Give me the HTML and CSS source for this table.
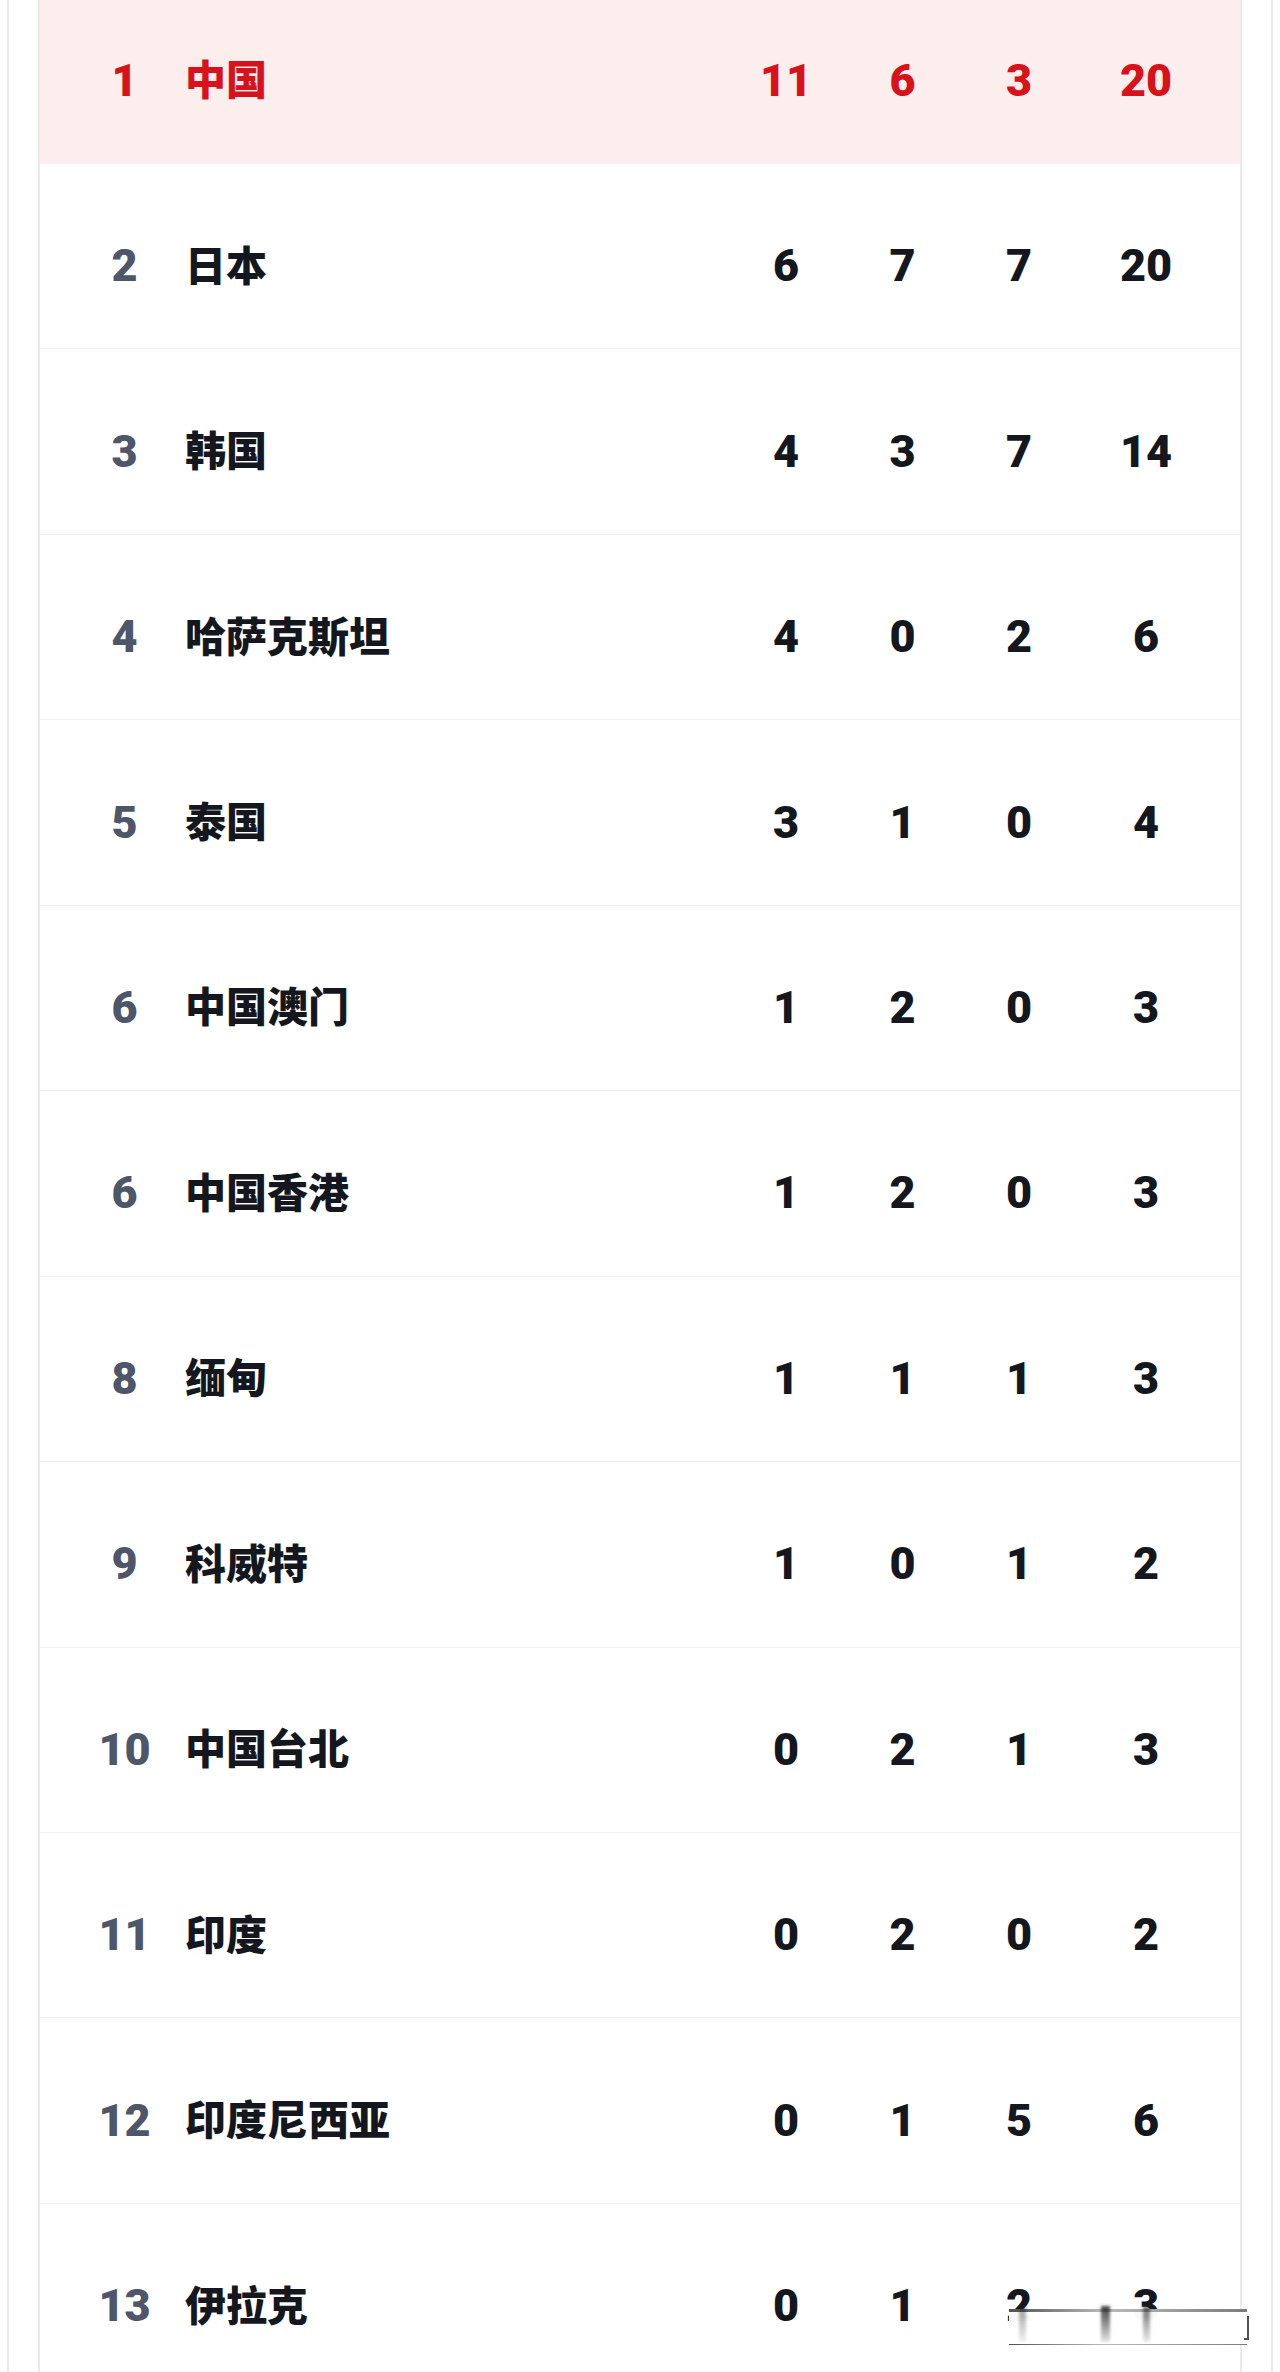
FILE: index.html
```html
<!DOCTYPE html>
<html lang="zh-CN">
<head>
<meta charset="utf-8">
<title>奖牌榜</title>
<link rel="stylesheet" href="styles.css">
</head>
<body>
<div class="frame">
  <div class="card">
    <div class="row lead">
      <span class="rank">1</span><span class="name">中国</span><span class="num">11</span><span class="num">6</span><span class="num">3</span><span class="num">20</span>
    </div>
    <div class="row">
      <span class="rank">2</span><span class="name">日本</span><span class="num">6</span><span class="num">7</span><span class="num">7</span><span class="num">20</span>
    </div>
    <div class="row">
      <span class="rank">3</span><span class="name">韩国</span><span class="num">4</span><span class="num">3</span><span class="num">7</span><span class="num">14</span>
    </div>
    <div class="row">
      <span class="rank">4</span><span class="name">哈萨克斯坦</span><span class="num">4</span><span class="num">0</span><span class="num">2</span><span class="num">6</span>
    </div>
    <div class="row">
      <span class="rank">5</span><span class="name">泰国</span><span class="num">3</span><span class="num">1</span><span class="num">0</span><span class="num">4</span>
    </div>
    <div class="row">
      <span class="rank">6</span><span class="name">中国澳门</span><span class="num">1</span><span class="num">2</span><span class="num">0</span><span class="num">3</span>
    </div>
    <div class="row">
      <span class="rank">6</span><span class="name">中国香港</span><span class="num">1</span><span class="num">2</span><span class="num">0</span><span class="num">3</span>
    </div>
    <div class="row">
      <span class="rank">8</span><span class="name">缅甸</span><span class="num">1</span><span class="num">1</span><span class="num">1</span><span class="num">3</span>
    </div>
    <div class="row">
      <span class="rank">9</span><span class="name">科威特</span><span class="num">1</span><span class="num">0</span><span class="num">1</span><span class="num">2</span>
    </div>
    <div class="row">
      <span class="rank">10</span><span class="name">中国台北</span><span class="num">0</span><span class="num">2</span><span class="num">1</span><span class="num">3</span>
    </div>
    <div class="row">
      <span class="rank">11</span><span class="name">印度</span><span class="num">0</span><span class="num">2</span><span class="num">0</span><span class="num">2</span>
    </div>
    <div class="row">
      <span class="rank">12</span><span class="name">印度尼西亚</span><span class="num">0</span><span class="num">1</span><span class="num">5</span><span class="num">6</span>
    </div>
    <div class="row">
      <span class="rank">13</span><span class="name">伊拉克</span><span class="num">0</span><span class="num">1</span><span class="num">2</span><span class="num">3</span>
    </div>
    <div class="smudge">
      <i class="bar b1"></i><i class="bar b2"></i><i class="bar b3"></i><i class="bracket"></i>
    </div>
  </div>
</div>
</body>
</html>
```

FILE: styles.css
```css
html, body {
  margin: 0;
  padding: 0;
  background: #ffffff;
}

body {
  height: 2372px;
  overflow: hidden;
  font-family: "Noto Sans CJK SC", "Noto Sans", sans-serif;
}

.frame {
  margin: 0 7px;
  padding: 0 29px;
  border-left: 2px solid #e9e9eb;
  border-right: 2px solid #e9e9eb;
  min-height: 2400px;
}

.card {
  position: relative;
  margin-top: -21.45px;
  border-left: 2px solid #ebebed;
  border-right: 2px solid #ebebed;
}

.row {
  display: grid;
  grid-template-columns: 81px 1fr 116px 117px 116px 138px;
  align-items: center;
  box-sizing: border-box;
  height: 185.45px;
  padding: 19px 25px 0 44px;
  border-bottom: 1px solid #f1f1f3;
  color: #14171d;
}

.row.lead {
  background: #fdeeee;
  border-bottom-color: #fdeeee;
  color: #d8121b;
}

.rank,
.num {
  font-family: Roboto, "Liberation Sans", sans-serif;
  font-weight: 900;
  font-size: 45px;
  line-height: 1;
  text-align: center;
}

.rank {
  color: #4e566a;
}

.lead .rank {
  color: #d8121b;
}

.name {
  padding-left: 20px;
  padding-bottom: 5px;
  font-family: "Noto Sans CJK SC", sans-serif;
  font-weight: 900;
  font-size: 41px;
  line-height: 1;
  white-space: nowrap;
}

.smudge {
  position: absolute;
  left: 969px;
  top: 2330px;
  width: 238px;
  height: 32px;
  background: linear-gradient(to bottom, rgba(255,255,255,0.97), #ffffff);
  border-top: 3px solid transparent;
  border-image: linear-gradient(to right, rgba(60,60,60,0.9), rgba(120,120,120,0.5) 40%, rgba(90,90,90,0.8) 100%) 1;
  border-bottom: 1px solid rgba(150,150,150,0.35);
}

.bar {
  position: absolute;
  top: -6px;
  width: 7px;
  height: 36px;
  background: linear-gradient(to bottom, rgba(30,30,30,0.85), rgba(80,80,80,0.15));
  filter: blur(1.5px);
}

.b1 { left: 10px; opacity: 0.5; }
.b2 { left: 92px; width: 9px; }
.b3 { left: 134px; opacity: 0.75; }

.bracket {
  position: absolute;
  right: -2px;
  top: 4px;
  width: 3px;
  height: 22px;
  border-right: 2px solid rgba(40,40,40,0.8);
  border-bottom: 2px solid rgba(40,40,40,0.8);
}
```
